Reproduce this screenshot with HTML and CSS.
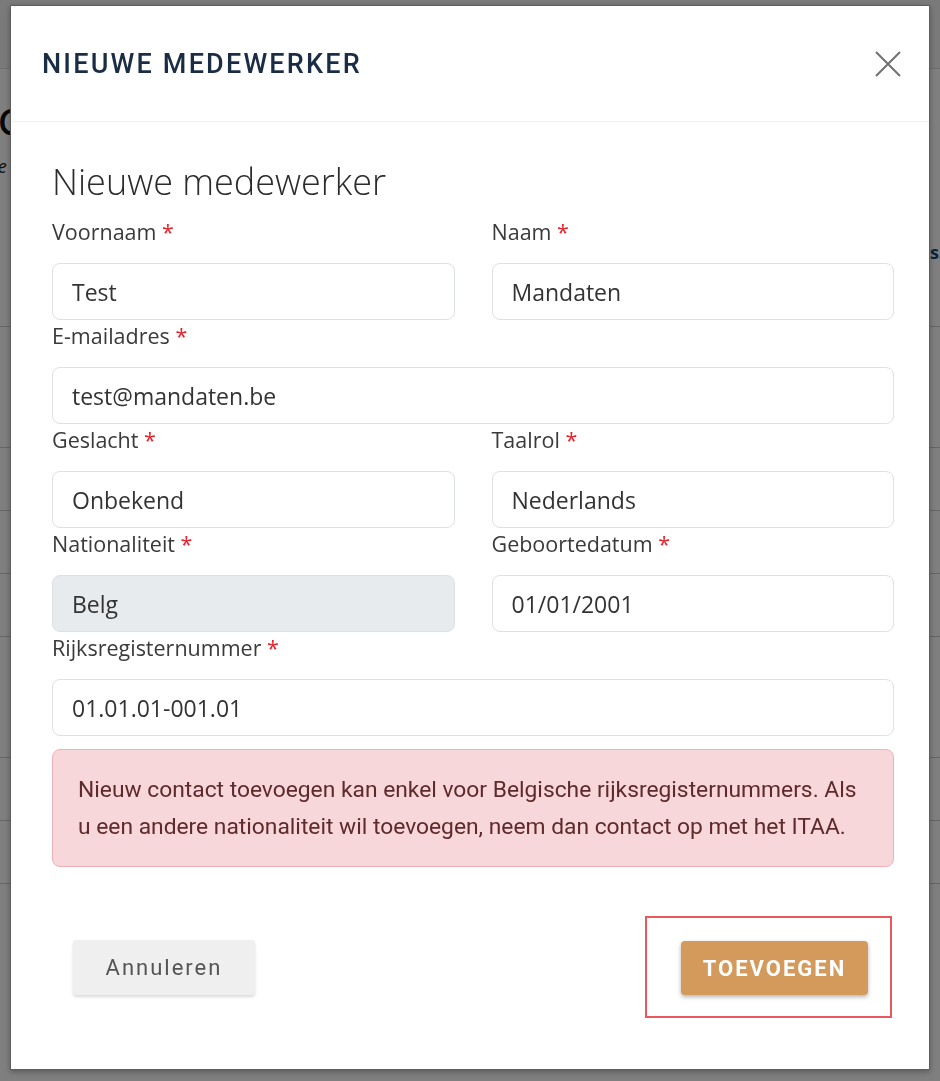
FILE: index.html
```html
<!DOCTYPE html>
<html lang="nl">
<head>
  <meta charset="UTF-8">
  <title>Nieuwe medewerker</title>
  <link rel="stylesheet" href="styles.css">
</head>
<body>

  <!-- pagina achter de modal -->
  <div class="page">
    <div class="page-top"></div>
    <h1 class="page-title">Contacten</h1>
    <p class="page-sub">Overzie</p>
    <div class="page-link">Meer details.</div>
    <div class="page-row"></div>
    <div class="page-row tall"></div>
    <div class="page-row"></div>
    <div class="page-row"></div>
    <div class="page-row"></div>
    <div class="page-row tall"></div>
    <div class="page-row"></div>
    <div class="page-row"></div>
  </div>

  <div class="backdrop"></div>

  <!-- MODAL -->
  <div class="modal">
    <div class="modal-header">
      <div class="modal-title">NIEUWE MEDEWERKER</div>
      <span class="modal-close">
        <svg width="26" height="26" viewBox="0 0 26 26">
          <path d="M1 1 L25 25 M25 1 L1 25" stroke="#707070" stroke-width="2" fill="none"/>
        </svg>
      </span>
    </div>

    <div class="modal-body">
      <h2>Nieuwe medewerker</h2>

      <div class="form-grid">
        <div class="field">
          <label>Voornaam <span class="req">*</span></label>
          <div class="input">Test</div>
        </div>
        <div class="field">
          <label>Naam <span class="req">*</span></label>
          <div class="input">Mandaten</div>
        </div>
        <div class="field wide">
          <label>E-mailadres <span class="req">*</span></label>
          <div class="input">test@mandaten.be</div>
        </div>
        <div class="field">
          <label>Geslacht <span class="req">*</span></label>
          <div class="input">Onbekend</div>
        </div>
        <div class="field">
          <label>Taalrol <span class="req">*</span></label>
          <div class="input">Nederlands</div>
        </div>
        <div class="field">
          <label>Nationaliteit <span class="req">*</span></label>
          <div class="input disabled">Belg</div>
        </div>
        <div class="field">
          <label>Geboortedatum <span class="req">*</span></label>
          <div class="input">01/01/2001</div>
        </div>
        <div class="field wide">
          <label>Rijksregisternummer <span class="req">*</span></label>
          <div class="input">01.01.01-001.01</div>
        </div>
      </div>

      <div class="alert">
        Nieuw contact toevoegen kan enkel voor Belgische rijksregisternummers. Als
        u een andere nationaliteit wil toevoegen, neem dan contact op met het ITAA.
      </div>
    </div>

    <div class="modal-footer">
      <button class="btn btn-cancel">Annuleren</button>
      <div class="highlight">
        <button class="btn btn-add">TOEVOEGEN</button>
      </div>
    </div>
  </div>

</body>
</html>
```

FILE: styles.css
```css
body {
  margin: 0;
  font-family: "Open Sans", Lato, sans-serif;
  background-color: #fff;
  color: #333;
  overflow: hidden;
}

/* pagina achter de modal */
.page {
  height: 1081px;
}

.page-top {
  height: 68px;
  border-bottom: 1px solid #ddd;
  background-color: #f4f4f4;
}

.page-title {
  margin: 28px 0 0 -2px;
  font-size: 36px;
  font-weight: 600;
  color: #111;
}

.page-sub {
  margin: 8px 0 0 -52px;
  font-style: italic;
  font-size: 18px;
  color: #222;
}

.page-link {
  text-align: right;
  margin: 62px -4px 0 0;
  font-size: 18px;
  font-weight: bold;
  color: #1b4a7a;
}

.page-row {
  height: 62px;
  border-bottom: 1px solid #ccc;
}

.page-row.tall {
  height: 120px;
}

.backdrop {
  position: fixed;
  inset: 0;
  background-color: rgba(0, 0, 0, 0.5);
}

/* MODAL */
.modal {
  position: fixed;
  top: 5px;
  left: 10px;
  width: 920px;
  height: 1065px;
  box-sizing: border-box;
  background-color: #fff;
  border: 1px solid #5e5e5e;
  box-shadow: 0 2px 6px rgba(0, 0, 0, 0.3);
  display: flex;
  flex-direction: column;
}

.modal-header {
  height: 115px;
  padding: 0 28px 0 31px;
  border-bottom: 1px solid #eef0f2;
  display: flex;
  align-items: center;
  justify-content: space-between;
}

.modal-title {
  font-family: Roboto, sans-serif;
  font-weight: 500;
  font-size: 27px;
  letter-spacing: 2.2px;
  color: #1b2d45;
}

.modal-close {
  display: flex;
  cursor: pointer;
}

.modal-body {
  padding: 40px 35px 0 41px;
}

.modal-body h2 {
  margin: 0 0 16px;
  font-size: 36px;
  line-height: 40px;
  font-weight: 300;
  color: #2b2b2b;
}

.form-grid {
  display: grid;
  grid-template-columns: 1fr 1fr;
  column-gap: 37px;
  row-gap: 2px;
}

.field.wide {
  grid-column: span 2;
}

.field label {
  display: block;
  font-size: 21.5px;
  line-height: 28px;
  margin-bottom: 17px;
  color: #3a3a3a;
}

.req {
  color: #e8212b;
}

.input {
  height: 57px;
  box-sizing: border-box;
  border: 1px solid #dde1e6;
  border-radius: 8px;
  padding: 0 19px;
  display: flex;
  align-items: center;
  font-size: 23px;
  color: #333;
}

.input.disabled {
  background-color: #e8ebee;
}

.alert {
  margin-top: 13px;
  padding: 21px 28px 21px 25px;
  background-color: #f8d7da;
  border: 1px solid #f1b0b7;
  border-radius: 8px;
  font-family: Roboto, sans-serif;
  font-size: 22.8px;
  line-height: 37px;
  color: #5e2a2c;
}

.modal-footer {
  padding: 49px 37px 0 62px;
  display: flex;
  justify-content: space-between;
  align-items: center;
}

.btn {
  border: none;
  font-family: Roboto, sans-serif;
  font-size: 22px;
  cursor: pointer;
}

.btn-cancel {
  width: 182px;
  height: 55px;
  background-color: #efefef;
  color: #555;
  letter-spacing: 2px;
  border-radius: 3px;
  box-shadow: 0 2px 3px rgba(0, 0, 0, 0.15);
}

.btn-add {
  width: 187px;
  height: 54px;
  background-color: #d39a5b;
  color: #fff;
  font-weight: 700;
  letter-spacing: 2px;
  border-radius: 4px;
  box-shadow: 0 2px 4px rgba(0, 0, 0, 0.3);
}

/* rood kader rond de knop */
.highlight {
  border: 2px solid #e8585e;
  padding: 23px 22px 21px 34px;
  display: flex;
}
```
